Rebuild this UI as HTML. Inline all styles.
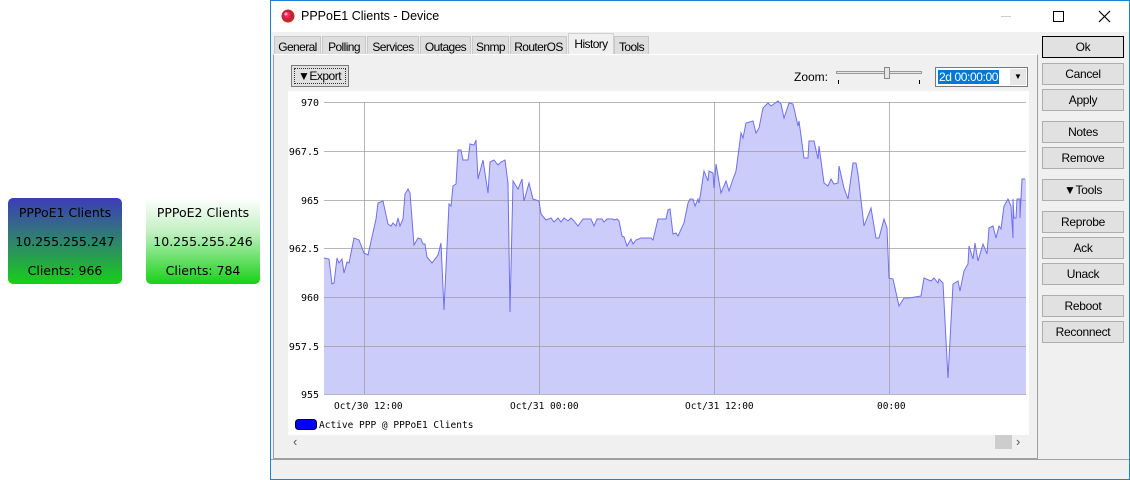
<!DOCTYPE html>
<html><head><meta charset="utf-8"><style>
*{box-sizing:border-box;margin:0;padding:0}
body{width:1130px;height:480px;background:#fff;position:relative;overflow:hidden;font-family:"Liberation Sans",sans-serif;font-size:12px;color:#000}
.card{position:absolute;top:198px;width:114px;height:86px;border-radius:5px;text-align:center;font-family:"DejaVu Sans",sans-serif;font-size:12.5px;line-height:29px;padding-top:0}
.c1{left:8px;background:linear-gradient(#3d3cb8,#2e8a66 55%,#18d018)}
.c2{left:146px;background:linear-gradient(#fff,#c0f0c0 40%,#18d018)}
.win{position:absolute;left:270px;top:0;width:860px;height:480px;border:1px solid #1883d7;background:#f0f0f0}
.title{position:absolute;left:0;top:0;width:858px;height:31px;background:#fff}
.title span{position:absolute;left:30px;top:8px;font-size:12.5px}
.tabs{position:absolute;top:33px;left:3px;height:20px}
.tab{position:absolute;top:2px;height:19px;background:#dedede;border:1px solid #c8c8c8;font-size:12px;letter-spacing:-0.6px;padding-top:3px;text-align:center;white-space:nowrap;overflow:hidden}
.panel{position:absolute;left:2px;top:53px;width:765px;height:405px;border:1px solid #a0a0a0;border-top:1px solid #fff}
.btn{position:absolute;left:771px;width:82px;height:22px;border:1px solid #adadad;background:#e1e1e1;text-align:center;font-size:12px;line-height:20px;letter-spacing:-0.3px}
</style></head><body>
<div class="card c1">PPPoE1 Clients<br>10.255.255.247<br>Clients: 966</div>
<div class="card c2">PPPoE2 Clients<br>10.255.255.246<br>Clients: 784</div>
<div class="win">
 <div class="title">
  <svg style="position:absolute;left:10px;top:8px" width="14" height="14"><circle cx="7" cy="7" r="6.5" fill="#c62828"/><circle cx="6" cy="6" r="3" fill="#f28"/><circle cx="5" cy="5" r="1.5" fill="#fff" opacity=".6"/></svg>
  <span>PPPoE1 Clients - Device</span>
  <div style="position:absolute;left:730px;top:15px;width:10px;height:1px;background:#ccc"></div>
  <div style="position:absolute;left:782px;top:10px;width:11px;height:11px;border:1px solid #000"></div>
  <svg style="position:absolute;left:827px;top:9px" width="13" height="13"><path d="M1 1L12 12M12 1L1 12" stroke="#000" stroke-width="1.2"/></svg>
 </div>
 <div class="tabs">
  <div class="tab" style="left:0;width:47px">General</div>
  <div class="tab" style="left:48px;width:44px">Polling</div>
  <div class="tab" style="left:93px;width:52px">Services</div>
  <div class="tab" style="left:146px;width:51px">Outages</div>
  <div class="tab" style="left:198px;width:37px">Snmp</div>
  <div class="tab" style="left:236px;width:57px">RouterOS</div>
  <div class="tab" style="left:294px;top:-1px;height:22px;width:46px;background:#f0f0f0;border-color:#d0d0d0;border-bottom:none;padding-top:3px">History</div>
  <div class="tab" style="left:340px;width:35px">Tools</div>
 </div>
 <div class="panel"></div>
 <div style="position:absolute;left:20px;top:64px;width:58px;height:22px;border:1px solid #7a7a7a;background:#e1e1e1"><div style="margin:2px;border:1px dotted #333;height:16px;font-size:12px;line-height:14px;padding-left:3px;letter-spacing:-0.5px">&#9660;Export</div></div>
 <div style="position:absolute;left:523px;top:69px;font-size:12px">Zoom:</div>
 <div style="position:absolute;left:565px;top:70px;width:86px;height:3px;border:1px solid #999;background:#e6e6e6"></div>
 <div style="position:absolute;left:613px;top:66px;width:6px;height:12px;background:#e6e6e6;border:1px solid #888"></div>
 <div style="position:absolute;left:567px;top:79px;width:1px;height:4px;background:#000"></div>
 <div style="position:absolute;left:648px;top:79px;width:1px;height:4px;background:#000"></div>
 <div style="position:absolute;left:664px;top:66px;width:93px;height:20px;border:1px solid #7a7a7a;background:#fff"><span style="position:absolute;left:2px;top:2px;background:#0078d7;color:#fff;font-size:12px;line-height:14px;padding:0 1px;letter-spacing:-0.4px">2d 00:00:00</span><div style="position:absolute;right:1px;top:1px;width:16px;height:16px;background:#e6e6e6;text-align:center;font-size:8px;line-height:16px">&#9660;</div></div>
 <svg style="position:absolute;left:17px;top:90px" width="741" height="344">
  <rect width="741" height="344" fill="#fff"/>
  <g transform="translate(-287,-90)">
   <polygon fill="#ccccfa" points="323,393 323,257 328,258 331,283 333,282 336,257 338,262 341,258 343,272 346,261 348,262 353,237 358,239 363,252 367,254 373,227 375,218 377,202 382,200 387,223 390,225 392,222 395,225 397,217 399,225 402,218 404,193 407,188 409,192 413,244 417,237 420,238 422,243 424,243 426,256 431,262 437,254 440,242 443,309 448,203 450,205 452,185 455,183 457,149 460,149 462,159 467,159 469,143 473,144 475,139 477,178 482,159 487,192 489,161 493,159 497,164 500,161 504,159 507,182 509,311 512,180 517,188 521,178 523,200 528,182 532,198 538,200 540,213 545,219 550,217 553,221 557,217 560,221 563,217 567,220 570,217 573,220 577,225 582,218 590,218 593,225 596,218 601,218 603,221 606,218 612,218 613,219 616,218 618,220 621,235 623,236 626,245 630,238 632,243 635,239 640,237 650,237 652,239 657,218 665,218 667,209 669,208 672,233 675,232 677,235 683,222 687,202 689,198 692,198 694,205 697,198 698,202 700,190 703,170 707,180 708,170 712,172 713,187 715,163 720,192 725,180 728,190 732,178 735,170 740,132 742,137 745,122 752,120 755,132 758,127 762,107 767,102 770,105 777,100 780,103 783,117 788,102 792,103 797,125 798,120 803,157 807,157 808,140 813,140 817,158 818,145 823,182 827,185 830,178 833,183 837,182 838,165 843,187 847,198 852,162 855,162 857,173 863,225 870,207 875,237 878,237 883,218 886,227 888,277 892,278 898,305 903,297 908,297 920,295 923,277 930,280 933,277 937,282 938,278 942,282 947,377 952,283 957,280 959,290 963,270 967,263 968,245 972,258 974,242 977,260 982,243 986,253 988,227 992,225 995,237 998,225 1000,228 1003,205 1007,198 1010,205 1012,237 1012,198 1013,217 1015,217 1016,198 1019,198 1019,217 1021,178 1024,178 1025,178 1025,393"/>
   <g stroke="#999" stroke-opacity=".7" stroke-width="1">
    <path d="M323 101.5H1025M323 150.5H1025M323 199.5H1025M323 247.5H1025M323 296.5H1025M323 345.5H1025M323 393.5H1025"/>
    <path d="M363.5 101V393M538.5 101V393M713.5 101V393M888.5 101V393"/>
   </g>
   <polyline fill="none" stroke="#6f6ff0" stroke-width="1" points="323,257 328,258 331,283 333,282 336,257 338,262 341,258 343,272 346,261 348,262 353,237 358,239 363,252 367,254 373,227 375,218 377,202 382,200 387,223 390,225 392,222 395,225 397,217 399,225 402,218 404,193 407,188 409,192 413,244 417,237 420,238 422,243 424,243 426,256 431,262 437,254 440,242 443,309 448,203 450,205 452,185 455,183 457,149 460,149 462,159 467,159 469,143 473,144 475,139 477,178 482,159 487,192 489,161 493,159 497,164 500,161 504,159 507,182 509,311 512,180 517,188 521,178 523,200 528,182 532,198 538,200 540,213 545,219 550,217 553,221 557,217 560,221 563,217 567,220 570,217 573,220 577,225 582,218 590,218 593,225 596,218 601,218 603,221 606,218 612,218 613,219 616,218 618,220 621,235 623,236 626,245 630,238 632,243 635,239 640,237 650,237 652,239 657,218 665,218 667,209 669,208 672,233 675,232 677,235 683,222 687,202 689,198 692,198 694,205 697,198 698,202 700,190 703,170 707,180 708,170 712,172 713,187 715,163 720,192 725,180 728,190 732,178 735,170 740,132 742,137 745,122 752,120 755,132 758,127 762,107 767,102 770,105 777,100 780,103 783,117 788,102 792,103 797,125 798,120 803,157 807,157 808,140 813,140 817,158 818,145 823,182 827,185 830,178 833,183 837,182 838,165 843,187 847,198 852,162 855,162 857,173 863,225 870,207 875,237 878,237 883,218 886,227 888,277 892,278 898,305 903,297 908,297 920,295 923,277 930,280 933,277 937,282 938,278 942,282 947,377 952,283 957,280 959,290 963,270 967,263 968,245 972,258 974,242 977,260 982,243 986,253 988,227 992,225 995,237 998,225 1000,228 1003,205 1007,198 1010,205 1012,237 1012,198 1013,217 1015,217 1016,198 1019,198 1019,217 1021,178 1024,178"/>
   <g font-family="DejaVu Sans Mono,monospace" font-size="10" text-anchor="end" fill="#000">
    <text x="318" y="105">970</text><text x="318" y="154">967.5</text><text x="318" y="203">965</text><text x="318" y="251">962.5</text><text x="318" y="300">960</text><text x="318" y="349">957.5</text><text x="318" y="397">955</text>
   </g>
   <g font-family="DejaVu Sans Mono,monospace" font-size="9.5" fill="#000">
    <text x="333" y="408">Oct/30 12:00</text><text x="509" y="408">Oct/31 00:00</text><text x="684" y="408">Oct/31 12:00</text><text x="876" y="408">00:00</text>
    <text x="318" y="427">Active PPP @ PPPoE1 Clients</text>
   </g>
   <rect x="294.5" y="418.5" width="21" height="10" rx="3" fill="#0000ff" stroke="#000"/>
  </g>
 </svg>
 <div style="position:absolute;left:22px;top:433px;font-size:13px;color:#555">&#8249;</div>
 <div style="position:absolute;left:724px;top:434px;width:17px;height:14px;background:#cdcdcd"></div>
 <div style="position:absolute;left:745px;top:433px;font-size:13px;color:#555">&#8250;</div>
 <div style="position:absolute;left:0;top:458px;width:858px;height:1px;background:#a0a0a0"></div>
 <div class="btn" style="top:35px;border:1px solid #000">Ok</div>
 <div class="btn" style="top:62px">Cancel</div>
 <div class="btn" style="top:88px">Apply</div>
 <div class="btn" style="top:120px">Notes</div>
 <div class="btn" style="top:146px">Remove</div>
 <div class="btn" style="top:178px">&#9660;Tools</div>
 <div class="btn" style="top:210px">Reprobe</div>
 <div class="btn" style="top:236px">Ack</div>
 <div class="btn" style="top:262px">Unack</div>
 <div class="btn" style="top:294px">Reboot</div>
 <div class="btn" style="top:320px">Reconnect</div>
</div>
</body></html>
